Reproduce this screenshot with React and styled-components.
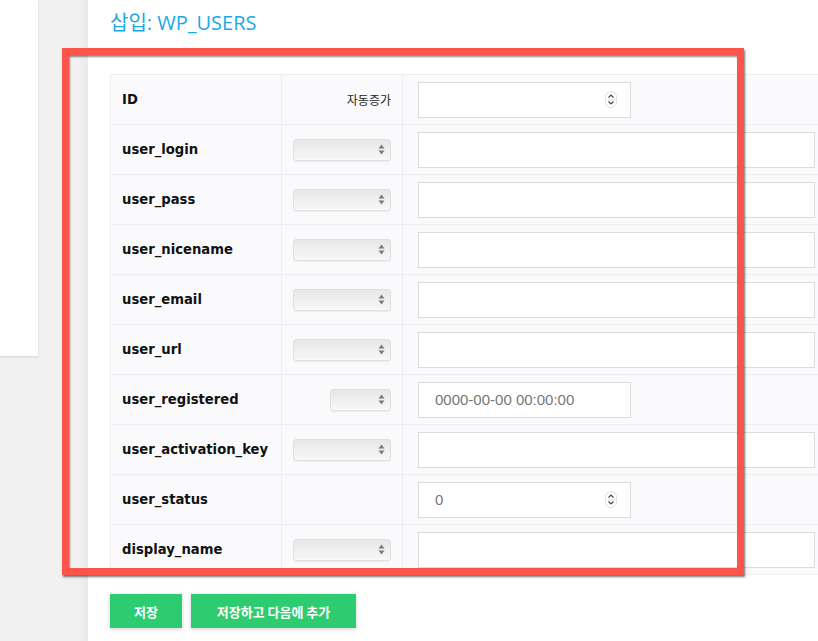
import React from "react";
import styled, { createGlobalStyle } from "styled-components";

const Global = createGlobalStyle`
  html, body { margin: 0; padding: 0; overflow: hidden; }
  body { background: #f1f1f1; width: 818px; height: 641px; }
  * { box-sizing: border-box; }
`;

const Page = styled.div`
  position: relative;
  display: flex;
  width: 818px;
  height: 641px;
  overflow: hidden;
`;

const Side = styled.div`
  width: 88px;
  flex: none;
  background: linear-gradient(to right, #f1f1f1 0%, #f1f1f1 88%, #e9e9e9 100%);
`;

const SidePanel = styled.div`
  width: 38px;
  height: 356px;
  background: #fff;
  box-shadow: 0 1px 2px rgba(0, 0, 0, 0.12);
`;

const Main = styled.div`
  flex: 1;
  background: #fff;
  padding: 9px 0 0 22px;
  overflow: hidden;
`;

const Title = styled.h1`
  margin: 0 0 34px;
  height: 31px;
  font: 400 20px/27px "Open Sans", "Noto Sans CJK KR", sans-serif;
  color: #1ba8e6;
`;

const Table = styled.div`
  width: 740px;
  border-top: 1px solid #eeeef1;
  border-left: 1px solid #eeeef1;
`;

const Row = styled.div`
  display: grid;
  grid-template-columns: 171px 121px 1fr;
  height: 50px;
  background: #fafafc;
  border-bottom: 1px solid #eeeef1;
`;

const Cell = styled.div`
  display: flex;
  align-items: center;
  border-right: 1px solid #eeeef1;
  padding: ${(p) => p.$pad || "0"};
  justify-content: ${(p) => p.$justify || "flex-start"};
`;

const Label = styled.span`
  font: 700 13.2px "DejaVu Sans", Verdana, sans-serif;
  color: #111;
`;

const Auto = styled.span`
  font: 400 12px "Noto Sans CJK KR", sans-serif;
  color: #222;
`;

const SelectBox = styled.div`
  width: ${(p) => p.$w}px;
  height: 22px;
  border-radius: 4px;
  background: linear-gradient(#e6e6e6, #efefef 45%, #f7f7f7);
  box-shadow: inset 0 0 0 1px #e0e0e0, inset 0 -1px 0 1px #fbfbfb, 0 1px 1px rgba(0, 0, 0, 0.06);
  display: flex;
  align-items: center;
  justify-content: flex-end;
  padding-right: 6px;
`;

const InputBox = styled.div`
  width: ${(p) => (p.$wide ? 397 : 213)}px;
  height: 36px;
  border: 1px solid #dcdcdc;
  background: #fff;
  display: flex;
  align-items: center;
  justify-content: space-between;
  padding: 0 13px 0 16px;
  font: 400 15px "Liberation Sans", Arial, sans-serif;
  color: #777;
`;

const Spin = styled.div`
  width: 12px;
  height: 17px;
  border-radius: 6px;
  border: 1px solid #e2e2e2;
  display: flex;
  flex-direction: column;
  align-items: center;
  justify-content: center;
`;

const Buttons = styled.div`
  display: flex;
  gap: 9px;
  margin-top: 19px;
`;

const Button = styled.button`
  height: 34px;
  width: ${(p) => p.$w}px;
  border: none;
  background: #2ecc71;
  color: #fff;
  font: 700 13px "Noto Sans CJK KR", sans-serif;
  box-shadow: 0 1px 4px rgba(0, 0, 0, 0.2);
  padding: 0;
`;

const Highlight = styled.div`
  position: absolute;
  left: 62px;
  top: 48px;
  width: 682px;
  height: 527px;
  border: 7px solid #fd5549;
  box-shadow: 1px 2px 2px rgba(0, 0, 0, 0.55), inset 1px 2px 2px rgba(0, 0, 0, 0.45);
  pointer-events: none;
`;

const Arrows = () => (
  <svg width="7" height="11" viewBox="0 0 7 11">
    <path d="M3.5 0.5 L6.5 4.5 H0.5 Z" fill="#7a7a7a" />
    <path d="M3.5 10.5 L6.5 6.5 H0.5 Z" fill="#7a7a7a" />
  </svg>
);

const Spinner = () => (
  <Spin>
    <svg width="8" height="13" viewBox="0 0 8 13">
      <path d="M1.5 4.5 L4 2 L6.5 4.5" fill="none" stroke="#444" strokeWidth="1.1" />
      <line x1="0" y1="6.5" x2="8" y2="6.5" stroke="#e6e6e6" strokeWidth="1.5" />
      <path d="M1.5 8.5 L4 11 L6.5 8.5" fill="none" stroke="#444" strokeWidth="1.1" />
    </svg>
  </Spin>
);

const rows = [
  { name: "ID", mid: "auto", input: "num", value: "" },
  { name: "user_login", mid: 98, input: "wide" },
  { name: "user_pass", mid: 98, input: "wide" },
  { name: "user_nicename", mid: 98, input: "wide" },
  { name: "user_email", mid: 98, input: "wide" },
  { name: "user_url", mid: 98, input: "wide" },
  { name: "user_registered", mid: 61, input: "text", value: "0000-00-00 00:00:00" },
  { name: "user_activation_key", mid: 98, input: "wide" },
  { name: "user_status", mid: null, input: "num", value: "0" },
  { name: "display_name", mid: 98, input: "wide" },
];

export default function App() {
  return (
    <Page>
      <Global />
      <Side>
        <SidePanel />
      </Side>
      <Main>
        <Title>삽입: WP_USERS</Title>
        <Table>
          {rows.map((r) => (
            <Row key={r.name}>
              <Cell $pad="0 0 0 11px">
                <Label>{r.name}</Label>
              </Cell>
              <Cell $pad="0 11px 0 0" $justify="flex-end">
                {r.mid === "auto" ? (
                  <Auto>자동증가</Auto>
                ) : r.mid ? (
                  <SelectBox $w={r.mid}>
                    <Arrows />
                  </SelectBox>
                ) : null}
              </Cell>
              <Cell $pad="0 0 0 15px">
                <InputBox $wide={r.input === "wide"}>
                  <span>{r.value}</span>
                  {r.input === "num" && <Spinner />}
                </InputBox>
              </Cell>
            </Row>
          ))}
        </Table>
        <Buttons>
          <Button $w={72}>저장</Button>
          <Button $w={165}>저장하고 다음에 추가</Button>
        </Buttons>
      </Main>
      <Highlight />
    </Page>
  );
}
